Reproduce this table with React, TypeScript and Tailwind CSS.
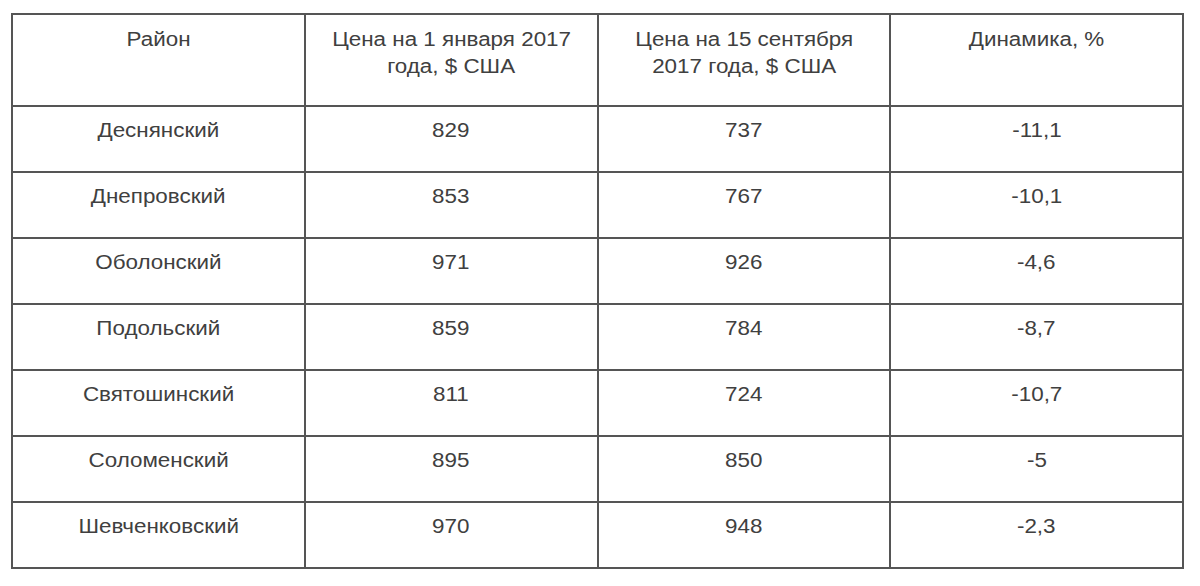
const header = [
  ["Район"],
  ["Цена на 1 января 2017", "года, $ США"],
  ["Цена на 15 сентября", "2017 года, $ США"],
  ["Динамика, %"],
];

const rows = [
  ["Деснянский", "829", "737", "-11,1"],
  ["Днепровский", "853", "767", "-10,1"],
  ["Оболонский", "971", "926", "-4,6"],
  ["Подольский", "859", "784", "-8,7"],
  ["Святошинский", "811", "724", "-10,7"],
  ["Соломенский", "895", "850", "-5"],
  ["Шевченковский", "970", "948", "-2,3"],
];

// text in the picture is a bit wider than plain Arial
const Txt = ({ children }: { children: string }) => (
  <span className="inline-block scale-x-[1.12]">{children}</span>
);

export default function App() {
  return (
    <div className="w-[1200px] h-[586px] bg-white pt-[13px] pl-[11px] font-['Liberation_Sans',Arial,sans-serif] text-[20px] leading-[27px] text-[#404040]">
      <div className="w-[1173px] grid grid-cols-4 border-l-2 border-t-2 border-[#555]">
        {header.map((lines, i) => (
          <div key={i} className="h-[92px] border-r-2 border-b-2 border-[#555] pt-[11px] text-center">
            {lines.map((l) => (
              <div key={l}>
                <Txt>{l}</Txt>
              </div>
            ))}
          </div>
        ))}
        {rows.map((row) =>
          row.map((cell, j) => (
            <div key={row[0] + j} className="h-[66px] border-r-2 border-b-2 border-[#555] pt-[10px] text-center">
              <Txt>{cell}</Txt>
            </div>
          ))
        )}
      </div>
    </div>
  );
}
